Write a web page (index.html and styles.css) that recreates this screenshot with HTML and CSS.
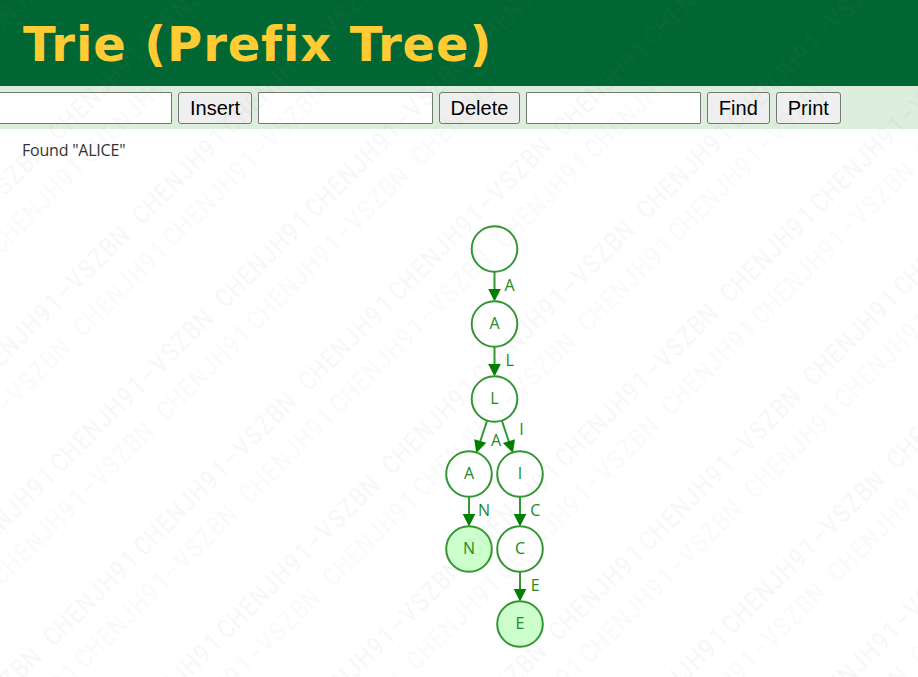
FILE: index.html
```html
<!DOCTYPE html>
<html lang="en">
<head>
<meta charset="utf-8">
<title>Trie (Prefix Tree)</title>
<link rel="stylesheet" href="styles.css">
</head>
<body>
<header class="banner"><h1>Trie (Prefix Tree)</h1></header>
<form class="controls">
  <input type="text" aria-label="Insert value"><button type="button">Insert</button>
  <input type="text" aria-label="Delete value"><button type="button" class="delete">Delete</button>
  <input type="text" aria-label="Find value"><button type="button">Find</button>
  <button type="button">Print</button>
</form>
<main>
  <svg class="canvas" width="918" height="548" viewBox="0 129 918 548">
    <text class="status" x="22" y="156" textLength="103.5">Found "ALICE"</text>
    <g class="edges">
      <path d="M494.5 272V290M494.5 347V365M487 421L480 442M502 421L509 442M469 497V515M520 497V515M520 572V590"/>
      <path class="heads" d="M488.2 289h12.6l-6.3 12.5zM488.2 364h12.6l-6.3 12.5zM474.2 439.2l12.1 3.6-10 10.2zM515 439.2l-12.1 3.8 10 10zM462.7 514h12.6l-6.3 12.5zM513.7 514h12.6l-6.3 12.5zM513.7 589h12.6l-6.3 12.5z"/>
    </g>
    <g class="nodes">
      <circle cx="494.5" cy="249" r="22.8"/>
      <circle cx="494.5" cy="324" r="22.8"/>
      <circle cx="494.5" cy="399" r="22.8"/>
      <circle cx="469" cy="474" r="22.8"/>
      <circle cx="520" cy="474" r="22.8"/>
      <circle class="word" cx="469" cy="549" r="22.8"/>
      <circle cx="520" cy="549" r="22.8"/>
      <circle class="word" cx="520" cy="624" r="22.8"/>
    </g>
    <g class="labels">
      <text x="494.5" y="328.5">A</text>
      <text x="494.5" y="403.5">L</text>
      <text x="469" y="478.5">A</text>
      <text x="520" y="478.5">I</text>
      <text x="469" y="553.5">N</text>
      <text x="520" y="553.5">C</text>
      <text x="520" y="628.5">E</text>
      <text x="509.5" y="291">A</text>
      <text x="509.8" y="366">L</text>
      <text x="496" y="445.7">A</text>
      <text x="521.5" y="434.5">I</text>
      <text x="484" y="516">N</text>
      <text x="535.3" y="516">C</text>
      <text x="535.3" y="591">E</text>
    </g>
  </svg>
</main>
<svg class="watermark" width="918" height="677" aria-hidden="true">
  <defs>
    <g id="mark" transform="scale(.88 1)">
      <text y="9" x="0 17.7 35.4 53.1 70.8 88.5 106.2 123.9 134 145.2 162.9 180.6 198.3 216 233.7 251.4 269.1 286.8 304.5 322.2 339.9 357.6 375.3">CHENJH91 CHENJH91–VSZBN</text>
    </g>
    <pattern id="tile" width="360.7" height="117.8" patternUnits="userSpaceOnUse" patternTransform="rotate(-45)">
      <g class="gray">
        <use href="#mark" x="308.9" y="15.5"/>
        <use href="#mark" x="-51.8" y="15.5"/>
      </g>
      <g class="green">
        <use href="#mark" x="187.5" y="54"/>
        <use href="#mark" x="-173.2" y="54"/>
      </g>
    </pattern>
  </defs>
  <rect width="918" height="677" fill="url(#tile)"/>
</svg>
</body>
</html>
```

FILE: styles.css
```css
body {
  margin: 0;
  width: 918px;
  height: 677px;
  overflow: hidden;
  background: #fff;
}
.banner {
  height: 86px;
  background: #063;
}
.banner h1 {
  margin: 0;
  padding-left: 23px;
  color: #fc3;
  font: bold 48px/88px "DejaVu Sans", sans-serif;
  letter-spacing: .88px;
  white-space: nowrap;
}
.controls {
  display: flex;
  gap: 6px;
  height: 43px;
  padding-top: 6px;
  box-sizing: border-box;
  background: #ded;
}
.controls input,
.controls button {
  box-sizing: border-box;
  height: 32px;
  margin: 0;
  border: 1px solid #767676;
  font: 20px "Liberation Sans", Arial, sans-serif;
}
.controls input {
  width: 175px;
  flex: none;
  padding: 1px 2px;
  border-radius: 1px;
  background: #fff;
}
.controls input:first-child {
  margin-left: -3px;
}
.controls button {
  padding: 0 11px;
  border-radius: 3px;
  background: #efefef;
  color: #000;
}
.controls .delete {
  padding: 0 10.5px;
}
.canvas {
  display: block;
  font: 16px "Open Sans", "Noto Sans", sans-serif;
}
.status {
  fill: #333;
}
.edges path {
  fill: none;
  stroke: #339633;
  stroke-width: 2;
}
.edges .heads {
  fill: #007f00;
  stroke: none;
}
.nodes circle {
  fill: #fff;
  stroke: #339633;
  stroke-width: 2;
}
.nodes .word {
  fill: #cfc;
}
.labels {
  fill: #218a21;
  text-anchor: middle;
}
.watermark {
  position: absolute;
  left: 0;
  top: 0;
  pointer-events: none;
}
.watermark text {
  font: 400 25px Roboto, sans-serif;
  text-anchor: middle;
}
.gray {
  fill: rgba(128, 128, 128, .07);
}
.green {
  fill: rgba(0, 110, 60, .033);
}
```
